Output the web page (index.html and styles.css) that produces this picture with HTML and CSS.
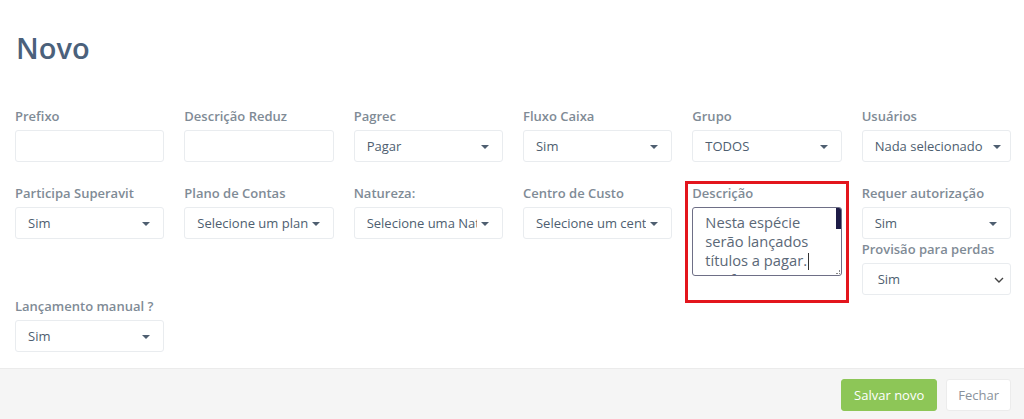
FILE: index.html
```html
<!DOCTYPE html>
<html lang="pt-BR">
<head>
<meta charset="utf-8">
<title>Novo</title>
<link rel="stylesheet" href="styles.css">
</head>
<body>
<div class="page">
  <h1 class="title">Novo</h1>
  <form class="form">
    <div class="row row-1">
      <div class="field">
        <label class="label">Prefixo</label>
        <div class="control"></div>
      </div>
      <div class="field">
        <label class="label">Descrição Reduz</label>
        <div class="control"></div>
      </div>
      <div class="field">
        <label class="label">Pagrec</label>
        <div class="control select"><span class="value">Pagar</span><span class="caret"></span></div>
      </div>
      <div class="field">
        <label class="label">Fluxo Caixa</label>
        <div class="control select"><span class="value">Sim</span><span class="caret"></span></div>
      </div>
      <div class="field">
        <label class="label">Grupo</label>
        <div class="control select"><span class="value">TODOS</span><span class="caret"></span></div>
      </div>
      <div class="field">
        <label class="label">Usuários</label>
        <div class="control select tight"><span class="value">Nada selecionado</span><span class="caret"></span></div>
      </div>
    </div>

    <div class="row row-2">
      <div class="field">
        <label class="label">Participa Superavit</label>
        <div class="control select"><span class="value">Sim</span><span class="caret"></span></div>
      </div>
      <div class="field">
        <label class="label">Plano de Contas</label>
        <div class="control select"><span class="value">Selecione um plano de contas</span><span class="caret"></span></div>
      </div>
      <div class="field">
        <label class="label">Natureza:</label>
        <div class="control select"><span class="value">Selecione uma Natureza</span><span class="caret"></span></div>
      </div>
      <div class="field">
        <label class="label">Centro de Custo</label>
        <div class="control select"><span class="value">Selecione um centro de custo</span><span class="caret"></span></div>
      </div>
      <div class="field highlighted">
        <label class="label">Descrição</label>
        <div class="textarea">
          <div class="textarea-text">Nesta espécie serão lançados títulos a pagar.<span class="cursor"></span> conforme o fluxo</div>
          <span class="scroll-thumb"></span>
          <span class="resize-grip"></span>
        </div>
      </div>
      <div class="field stack">
        <label class="label">Requer autorização</label>
        <div class="control select"><span class="value">Sim</span><span class="caret"></span></div>
        <label class="label">Provisão para perdas</label>
        <div class="control select native"><span class="value">Sim</span>
          <svg class="chevron" width="10" height="6" viewBox="0 0 10 6"><polyline points="1,1 5,5 9,1" fill="none" stroke="#444" stroke-width="1.4"/></svg>
        </div>
      </div>
    </div>

    <div class="row row-3">
      <div class="field">
        <label class="label">Lançamento manual ?</label>
        <div class="control select"><span class="value">Sim</span><span class="caret"></span></div>
      </div>
    </div>
  </form>
</div>
<footer class="footer">
  <button class="btn btn-success" type="button">Salvar novo</button>
  <button class="btn btn-default" type="button">Fechar</button>
</footer>
</body>
</html>
```

FILE: styles.css
```css
* { box-sizing: border-box; }

html, body {
  margin: 0;
  padding: 0;
  background: #ffffff;
  font-family: "Open Sans", "Noto Sans", "Liberation Sans", sans-serif;
  overflow: hidden;
}

.page {
  padding: 0 13px 0 15px;
}

.title {
  margin: 30px 0 0 1px;
  font-size: 29px;
  line-height: 36px;
  font-weight: 600;
  color: #4b617b;
}

.form {
  margin-top: 40px;
  padding-bottom: 16px;
}

.row {
  display: grid;
  grid-template-columns: repeat(6, 1fr);
  column-gap: 20px;
}

.row-1 { margin-bottom: 21px; }
.row-2 { margin-bottom: 1px; }

.field {
  display: flex;
  flex-direction: column;
  min-width: 0;
}

.label {
  display: block;
  font-size: 13px;
  line-height: 20px;
  font-weight: 600;
  color: #7f8b96;
  margin-bottom: 4px;
  white-space: nowrap;
}

.control {
  position: relative;
  height: 32px;
  border: 1px solid #e9ecef;
  border-radius: 3px;
  background: #ffffff;
}

.select .value {
  display: block;
  margin-right: 25px;
  padding-left: 12px;
  font-size: 13px;
  line-height: 30px;
  color: #4e5e70;
  white-space: nowrap;
  overflow: hidden;
}

.caret {
  position: absolute;
  right: 13px;
  top: 14px;
  width: 0;
  height: 0;
  border-top: 4px solid #4e5e70;
  border-left: 4px solid transparent;
  border-right: 4px solid transparent;
}

.tight .value { margin-right: 20px; }
.tight .caret { right: 9px; }

.native .value { padding-left: 15px; }

.chevron {
  position: absolute;
  right: 6px;
  top: 13px;
}

.highlighted { position: relative; }

.highlighted::after {
  content: "";
  position: absolute;
  left: -7px;
  right: -7px;
  top: -2px;
  bottom: -8px;
  border: 3px solid #e3151d;
  pointer-events: none;
}

.textarea {
  position: relative;
  height: 69px;
  border: 1px solid #6e6f86;
  border-radius: 3px;
  background: #ffffff;
  overflow: hidden;
}

.textarea-text {
  padding: 5px 20px 0 12px;
  font-size: 14.7px;
  line-height: 19px;
  color: #5b6877;
}

.cursor {
  display: inline-block;
  width: 1px;
  height: 17px;
  background: #333;
  vertical-align: -4px;
  margin-left: 1px;
}

.scroll-thumb {
  position: absolute;
  right: 0;
  top: 0;
  width: 5px;
  height: 21px;
  background: #1d1b46;
}

.resize-grip {
  position: absolute;
  right: 1px;
  bottom: 1px;
  width: 4px;
  height: 4px;
  border-right: 1px dotted #888;
  border-bottom: 1px dotted #888;
}

.footer {
  display: flex;
  justify-content: flex-end;
  gap: 9px;
  padding: 10px 13px 20px;
  background: #f5f5f5;
  border-top: 1px solid #ebebeb;
}

.btn {
  height: 32px;
  padding: 0 12px;
  font-family: "Open Sans", "Noto Sans", "Liberation Sans", sans-serif;
  font-size: 13px;
  line-height: 30px;
  border-radius: 3px;
  border: 1px solid transparent;
  cursor: pointer;
}

.btn-success {
  background: #8dc657;
  border-color: #8dc657;
  color: #ffffff;
}

.btn-default {
  background: #ffffff;
  border-color: #ececec;
  color: #8a929b;
  padding: 0 11px;
}
```
